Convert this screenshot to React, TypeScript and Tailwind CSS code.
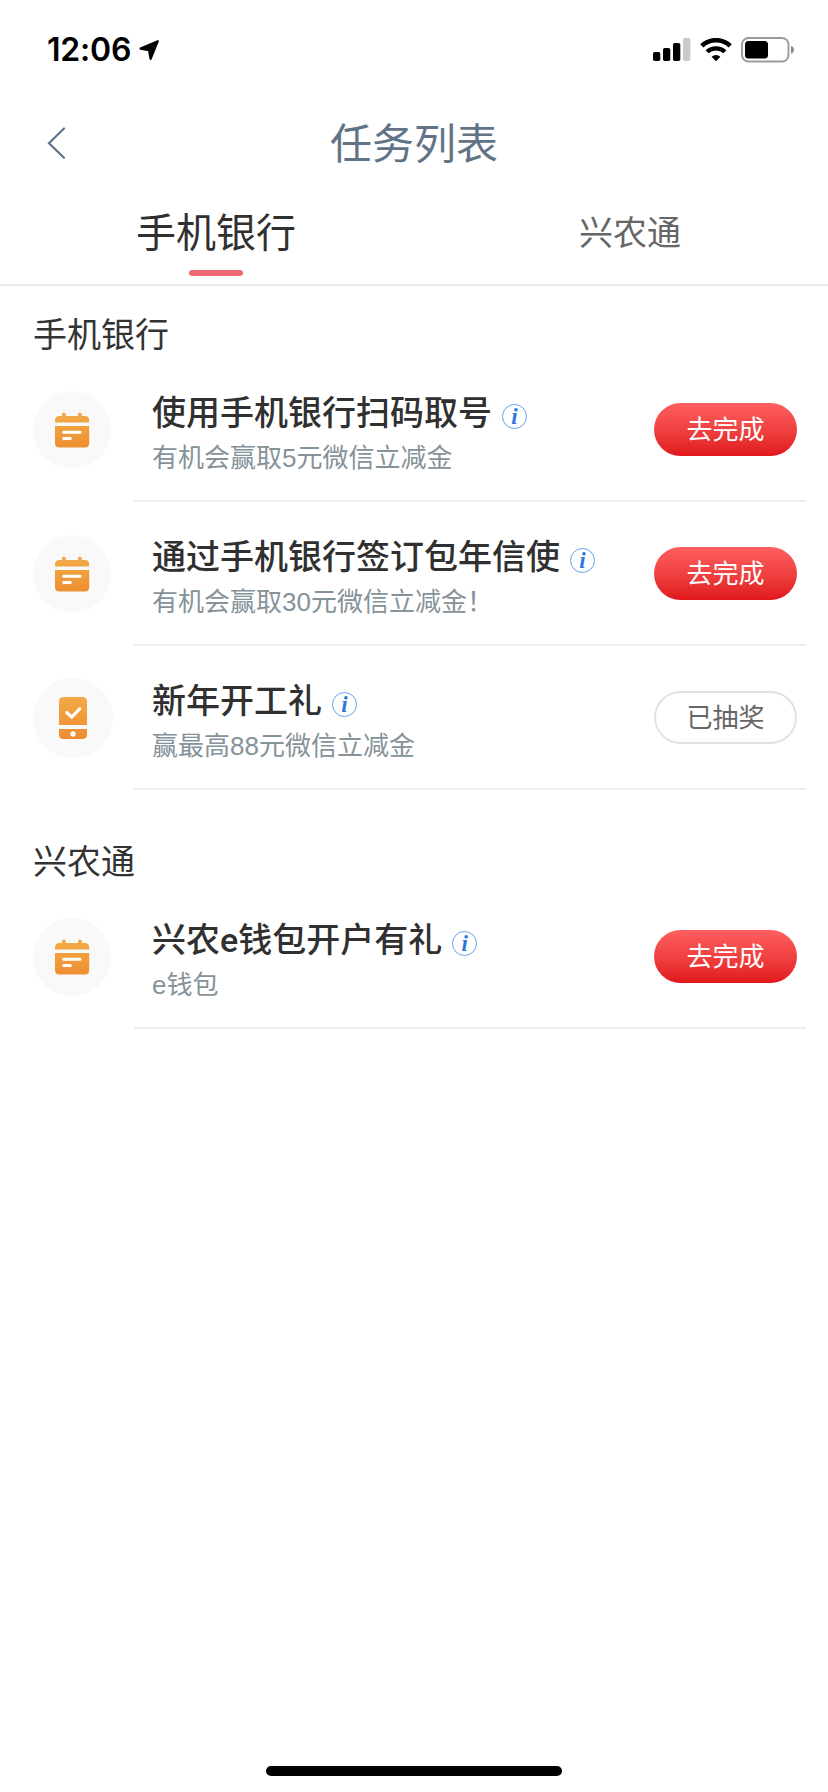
import clsx from 'clsx';

type Task = {
  title: string;
  description: string;
  icon: 'calendar' | 'phone';
  done?: boolean;
};

type TaskSectionProps = {
  name: string;
  tasks: Task[];
  className?: string;
};

const mobileBankTasks: Task[] = [
  { title: '使用手机银行扫码取号', description: '有机会赢取5元微信立减金', icon: 'calendar' },
  { title: '通过手机银行签订包年信使', description: '有机会赢取30元微信立减金！', icon: 'calendar' },
  { title: '新年开工礼', description: '赢最高88元微信立减金', icon: 'phone', done: true },
];

const xingnongTasks: Task[] = [{ title: '兴农e钱包开户有礼', description: 'e钱包', icon: 'calendar' }];

const StatusBar = () => (
  <div className="flex h-[99px] items-center justify-between pr-[33px] pl-[47px]">
    <div className="flex items-center gap-[7px]">
      <span className="font-['Inter'] text-[32px] leading-none font-semibold tracking-[-0.2px] text-black">12:06</span>
      <svg width="22" height="22" viewBox="0 0 22 22">
        <path
          d="M19.800 2.200 2.600 9.600 11 11.200 12.600 19.800Z"
          fill="#000"
          stroke="#000"
          strokeWidth="2.200"
          strokeLinejoin="round"
        />
      </svg>
    </div>
    <div className="flex items-center">
      <svg width="38" height="24" viewBox="0 0 38 24">
        <rect x="0" y="14" width="7.300" height="9" rx="1.800" />
        <rect x="10" y="10" width="7.300" height="13" rx="1.800" />
        <rect x="20" y="5" width="7.300" height="18" rx="1.800" />
        <rect x="30" y="0" width="7.300" height="23" rx="1.800" fill="#c9c9c9" />
      </svg>
      <svg className="ml-[9px]" width="32" height="24" viewBox="0 0 32 24" fill="none" stroke="#000">
        <path d="M1.800 7.900a20.500 20.500 0 0 1 28.400 0" strokeWidth="4.600" />
        <path d="M7.100 13.800a13 13 0 0 1 17.800 0" strokeWidth="4.300" />
        <path d="M16 23.200 11.600 18.700a6.400 6.400 0 0 1 8.800 0Z" fill="#000" stroke="none" />
      </svg>
      <svg className="ml-[9px]" width="54" height="26" viewBox="0 0 54 26">
        <rect x="1" y="1" width="46.500" height="23.500" rx="6.500" fill="none" stroke="#9b9b9b" strokeWidth="1.900" />
        <rect x="4" y="4" width="23" height="17.500" rx="3.500" />
        <path d="M50 8.700c1.700.5 3 2 3 4s-1.300 3.500-3 4Z" fill="#8c8c8c" />
      </svg>
    </div>
  </div>
);

const CalendarIcon = () => (
  <svg width="36" height="36" viewBox="0 0 36 36">
    <defs>
      <linearGradient id="calendar-fill" x1="0" y1="0" x2="0" y2="1">
        <stop offset="0" stopColor="#f2ab48" />
        <stop offset="1" stopColor="#ee8f32" />
      </linearGradient>
    </defs>
    <path
      d="M1 10.500V8.500Q1 4 5.500 4H8V2.500a1.700 1.700 0 0 1 3.900 0V4H24V2.500a1.700 1.700 0 0 1 3.900 0V4H31Q35.200 4 35.200 8.500v2ZM1 14H35.200V31Q35.200 35.500 31 35.500H5.500Q1 35.500 1 31Z"
      fill="url(#calendar-fill)"
    />
    <path d="M9.700 20.200H26M9.700 26.500H16.300" stroke="#fff" strokeWidth="3" strokeLinecap="round" />
  </svg>
);

const PhoneIcon = () => (
  <svg width="28" height="42" viewBox="0 0 28 42">
    <defs>
      <linearGradient id="phone-fill" x1="0" y1="0" x2="0" y2="1">
        <stop offset="0" stopColor="#f2ab44" />
        <stop offset="1" stopColor="#ee8b31" />
      </linearGradient>
    </defs>
    <path
      d="M0 28V4.500Q0 0 4.500 0h19Q28 0 28 4.500V28ZM0 32H28v5.500Q28 42 23.500 42h-19Q0 42 0 37.500Z"
      fill="url(#phone-fill)"
    />
    <path d="m7.700 15.500 5 4.600 8-8.300" fill="none" stroke="#fff" strokeWidth="3.200" strokeLinecap="round" />
    <circle cx="14" cy="37" r="2.700" fill="#fff" />
  </svg>
);

const InfoBadge = () => (
  <span className="mt-1.5 flex size-[25px] items-center justify-center rounded-full border border-[#69a0ee] font-['Liberation_Serif',serif] text-[23px] leading-none font-bold text-[#2f76dc] italic">
    i
  </span>
);

const TaskRow = ({ title, description, icon, done }: Task) => (
  <li className="flex h-36">
    <div className="flex w-[134px] items-center pl-[33px]">
      <div
        className={clsx(
          'flex items-center justify-center rounded-full bg-[#f9f9f9]',
          icon === 'phone' ? 'size-20' : 'size-[78px]'
        )}
      >
        {icon === 'phone' ? <PhoneIcon /> : <CalendarIcon />}
      </div>
    </div>
    <div className="mr-[22px] flex flex-1 items-center justify-between border-b-2 border-[#ededed] pr-[9px] pl-[18px]">
      <div className="pt-[11px]">
        <div className="flex h-11 items-center gap-[10px]">
          <h3 className="font-['Roboto','Noto_Sans_CJK_SC',sans-serif] text-[34px] leading-none font-medium text-[#303030]">
            {title}
          </h3>
          <InfoBadge />
        </div>
        <p className="mt-[3px] text-[26px] leading-10 text-[#869299]">{description}</p>
      </div>
      <button
        className={clsx(
          'h-[53px] w-[143px] rounded-full pt-0.5 text-[26px] leading-none',
          done
            ? 'border-2 border-[#e2e2e2] text-[#666]'
            : 'bg-linear-to-b from-[#ff5e60] to-[#e1151b] text-white'
        )}
      >
        {done ? '已抽奖' : '去完成'}
      </button>
    </div>
  </li>
);

const TaskSection = ({ name, tasks, className }: TaskSectionProps) => (
  <section className={className}>
    <h2 className="flex h-[72px] items-center pt-[26px] pl-[33px] text-[34px] leading-none text-[#333]">{name}</h2>
    <ul>
      {tasks.map((task) => (
        <TaskRow key={task.title} {...task} />
      ))}
    </ul>
  </section>
);

const App = () => {
  return (
    <div className="flex h-[1792px] w-[828px] flex-col overflow-hidden bg-white font-['Liberation_Sans','Noto_Sans_CJK_SC',sans-serif]">
      <StatusBar />
      <header className="grid h-[87px] grid-cols-[80px_1fr_80px] items-center">
        <button className="pl-[47px]">
          <svg width="19" height="32" viewBox="0 0 19 32" fill="none">
            <path d="M17 1.500 2 16.300 17 30.800" stroke="#5f7488" strokeWidth="2.200" strokeLinecap="round" />
          </svg>
        </button>
        <h1 className="pt-[5px] text-center text-[42px] leading-none text-[#617487]">任务列表</h1>
      </header>
      <nav className="flex h-[100px] border-b-2 border-[#ebebeb]">
        <div className="ml-[9px] flex w-[414px] shrink-0 flex-col items-center">
          <span className="flex h-[84px] items-center pt-[10px] text-[40px] leading-none text-[#303030]">
            手机银行
          </span>
          <span className="h-1.5 w-[54px] rounded-full bg-[#ee6a70]" />
        </div>
        <div className="flex h-[84px] w-[414px] shrink-0 items-center justify-center pt-[10px] text-[34px] leading-none text-[#666]">
          兴农通
        </div>
      </nav>
      <main className="flex-1">
        <TaskSection name="手机银行" tasks={mobileBankTasks} />
        <TaskSection name="兴农通" tasks={xingnongTasks} className="mt-[23px]" />
      </main>
      <div className="mb-4 ml-[266px] h-[10px] w-[296px] rounded-full bg-black" />
    </div>
  );
};

export default App;
